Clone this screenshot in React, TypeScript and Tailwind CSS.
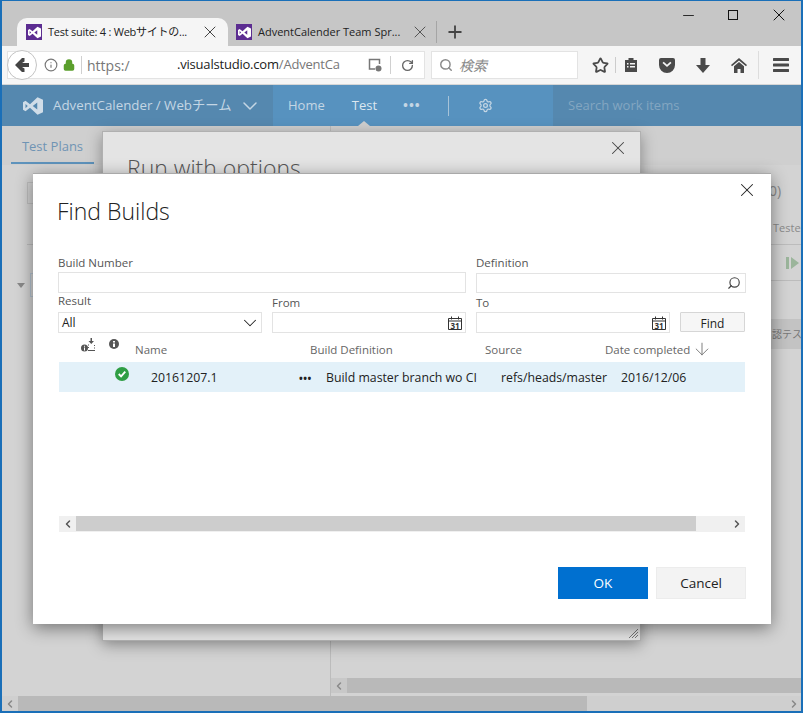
import { ChevronDown, ChevronLeft, ChevronRight, Settings, X, Plus, Minus, Search, RotateCw, Star, ArrowDown, Info, Lock } from 'lucide-react';

const font = { fontFamily: '"Open Sans", "Noto Sans CJK JP", sans-serif' };

function VsIcon({ size = 16, color = '#fff' }: { size?: number; color?: string }) {
  return (
    <svg width={size} height={size} viewBox="0 0 16 16" fill={color}>
      <path d="M11.6 1 16 3v10l-4.4 2-6-5.6L2 12.2 0 11V5l2-1.2 3.6 2.8zM2 6.300v3.400L3.800 8zM11.400 5.200 7.800 8l3.600 2.800z" fillRule="evenodd" />
    </svg>
  );
}

function Calendar() {
  return (
    <svg width="14" height="14" viewBox="0 0 14 14" fill="none" stroke="#333" strokeWidth="1">
      <path d="M0.5 2.500h13v11H0.500zM0.500 5h13M3.500 0.500v3M10.500 0.500v3" />
      <text x="7" y="12.500" textAnchor="middle" fontSize="8" fontWeight="700" fill="#333" stroke="none">31</text>
    </svg>
  );
}

function Field({ label, w, inputClass, children }: { label: string; w: string; inputClass?: string; children?: React.ReactNode }) {
  return (
    <div className={`flex flex-col ${w}`}>
      <span className="text-[11.5px] leading-[14px] pb-[2px] text-[#555]">{label}</span>
      <div className={`border border-[#e3e3e3] bg-white flex items-center justify-end pr-[3px] ${inputClass ?? 'h-[21px]'}`}>{children}</div>
    </div>
  );
}

function TabTitle({ title, className }: { title: string; className?: string }) {
  return <span className={`text-[11px] text-[#222] whitespace-nowrap ${className ?? ''}`}>{title}</span>;
}

export default function App() {
  return (
    <div style={font} className="relative w-[803px] h-[713px] overflow-hidden border-x-2 border-t border-b-2 border-[#1a6fb8] bg-[#d3d3d3] flex flex-col">
      {/* browser tabs */}
      <div className="h-[45px] bg-[#c6c6c6] shrink-0 flex items-end relative">
        <div className="ml-[15px] h-[28px] w-[211px] bg-[#f5f5f5] rounded-t-[10px] flex items-center pl-[9px] gap-[6px]">
          <div className="w-[16px] h-[16px] shrink-0 bg-[#5c2d91] flex items-center justify-center"><VsIcon size={13} /></div>
          <TabTitle title="Test suite: 4 : Webサイトの..." className="tracking-[-0.25px]" />
          <X size={20} strokeWidth={1.2} className="ml-auto mr-[8px] text-[#444]" />
        </div>
        <div className="h-[28px] w-[208px] flex items-center pl-[8px] gap-[6px]">
          <div className="w-[16px] h-[16px] shrink-0 bg-[#5c2d91] flex items-center justify-center"><VsIcon size={13} /></div>
          <TabTitle title="AdventCalender Team Spr..." />
          <X size={20} strokeWidth={1.2} className="ml-auto mr-[6px] text-[#555]" />
        </div>
        <div className="w-px h-[22px] bg-[#a5a5a5] mb-[3px]" />
        <Plus size={20} strokeWidth={2.2} className="ml-[8px] mb-[4px] text-[#444]" />
        <div className="absolute top-[4px] right-[12px] flex gap-[28px] items-center text-[#111]">
          <Minus size={17} strokeWidth={1.2} />
          <div className="w-[10px] h-[10px] border border-[#111] mx-[3px]" />
          <X size={20} strokeWidth={1.2} />
        </div>
      </div>

      {/* address bar */}
      <div className="h-[39px] bg-[#f5f5f5] shrink-0 border-b border-[#d6d6d6] flex items-center pl-[5px] text-[#4a4a4a]">
        <div className="relative w-[418px] h-[28px] bg-white border border-[#e3e3e3] flex items-center">
          <div className="w-[30px] h-[30px] -ml-px rounded-full border border-[#c4c4c4] bg-white flex items-center justify-center shrink-0">
            <svg width="16" height="16" viewBox="0 0 16 16" fill="#444"><path d="M8 1 1 8l7 7h2.500V11.500L8 10h7V6H8l2.500-1.500V1z" /></svg>
          </div>
          <Info size={14} className="ml-[7px] text-[#777]" />
          <Lock size={12} strokeWidth={3} className="ml-[5px] text-[#5b9f2c]" fill="#5b9f2c" />
          <div className="w-px h-[18px] bg-[#d0d0d0] ml-[6px]" />
          <span className="ml-[5px] text-[14px] text-[#777] w-[90px] shrink-0">https:/</span>
          <span className="text-[13px] tracking-[-0.2px] whitespace-nowrap w-[165px] shrink-0 text-[#777]"><span className="text-[#222]">.visualstudio.com</span>/AdventCa</span>
          <svg className="ml-[26px]" width="14" height="14" viewBox="0 0 14 14" fill="none" stroke="#777" strokeWidth="1.500"><path d="M7 11H1.500V1.500h10V6" /><circle cx="10.500" cy="10.500" r="3" fill="#777" stroke="none" /></svg>
          <div className="w-px h-[18px] bg-[#d0d0d0] ml-[8px]" />
          <RotateCw size={13} strokeWidth={2.500} className="ml-[10px] text-[#666]" />
        </div>
        <div className="ml-[6px] w-[147px] h-[28px] bg-white border border-[#e3e3e3] flex items-center pl-[7px] gap-[6px]">
          <Search size={14} strokeWidth={2.500} className="text-[#8a8a8a]" />
          <span className="text-[14px] italic text-[#888]">検索</span>
        </div>
        <Star size={17} strokeWidth={2.500} className="ml-[14px]" />
        <div className="w-px h-[16px] bg-[#ccc] ml-[6px]" />
        <svg className="ml-[8px]" width="14" height="16" viewBox="0 0 14 16" fill="#4a4a4a"><path d="M1 3h3.500V1h5v2H13v12H1zM3 6v1.500h1.500V6zm3 0v1.500h5V6zM3 9v1.500h1.500V9zm3 0v1.500h5V9z" fillRule="evenodd" /></svg>
        <svg className="ml-[21px]" width="16" height="15" viewBox="0 0 16 15" fill="#4a4a4a"><path d="M2 0h12a2 2 0 0 1 2 2v5a8 8 0 0 1-16 0V2a2 2 0 0 1 2-2zm1.500 5L8 9l4.500-4-1.200-1.200L8 6.700 4.700 3.800z" fillRule="evenodd" /></svg>
        <svg className="ml-[21px]" width="14" height="15" viewBox="0 0 14 15" fill="#4a4a4a"><path d="M4.500 0h5v7H14l-7 8-7-8h4.500z" /></svg>
        <svg className="ml-[21px]" width="16" height="15" viewBox="0 0 16 15" fill="#4a4a4a"><path d="M8 0 16 7l-1 1.300L8 2.500 1 8.300 0 7zM8 4l5 4.200V15H9.500v-4h-3v4H3V8.200z" /></svg>
        <div className="w-px h-[28px] bg-[#ddd] ml-[11px]" />
        <svg className="ml-[14px]" width="16" height="14" viewBox="0 0 16 14" fill="#4a4a4a"><path d="M1 0h14a1 1 0 0 1 0 3H1a1 1 0 0 1 0-3zm0 5.500h14a1 1 0 0 1 0 3H1a1 1 0 0 1 0-3zM1 11h14a1 1 0 0 1 0 3H1a1 1 0 0 1 0-3z" /></svg>
      </div>

      {/* vsts header */}
      <div className="h-[41px] shrink-0 bg-[#5588af] flex items-stretch text-[13px] text-[#c4d6e4] relative">
        <div className="w-[271px] flex items-center pl-[21px] shrink-0">
          <VsIcon size={20} color="#d0dde8" />
          <span className="ml-[10px] text-[13.300px] whitespace-nowrap">AdventCalender / Webチーム</span>
          <ChevronDown size={24} strokeWidth={1.500} className="ml-[7px]" />
        </div>
        <div className="w-[280px] bg-[#5792bf] flex items-center pl-[15px] shrink-0">
          <span>Home</span>
          <span className="ml-[27px] text-[#dbe7f0]">Test</span>
          <span className="ml-[26px] font-bold tracking-[1px] leading-none">•••</span>
          <div className="w-px h-[20px] bg-[#a7c3d8] ml-[27px]" />
          <Settings size={15} className="ml-[29px]" />
        </div>
        <span className="ml-[15px] self-center text-[#83a6c1]">Search work items</span>
        <div className="absolute left-[356px] bottom-0 w-0 h-0 border-x-[6px] border-x-transparent border-b-[5px] border-b-[#cfcfcf]" />
      </div>

      {/* dimmed page */}
      <div className="flex-1 min-h-0 flex bg-[#d3d3d3] text-[#8a8a8a] text-[12px]">
        <div className="w-[329px] shrink-0 border-r border-[#bcbcbc]">
          <div className="h-[39px] bg-[#cfcfcf] pt-[10px]">
            <div className="ml-[9px] w-[83px] h-[28px] border-b-2 border-[#5e93bc] text-center text-[13px] text-[#6f94b4] leading-[20px]">Test Plans</div>
          </div>
          <div className="mt-[17px] ml-[25px] w-[12px] h-[22px] border border-[#bfbfbf]" />
          <div className="mt-[40px] ml-[25px] w-[12px] h-px bg-[#bcbcbc]" />
          <div className="mt-[28px] ml-[15px] flex items-center gap-[5px]">
            <div className="w-0 h-0 border-x-[4px] border-x-transparent border-t-[5px] border-t-[#888]" />
            <div className="w-[8px] h-[24px] border border-[#b5c3d0]" />
          </div>
        </div>
        <div className="flex-1 min-w-0 flex flex-col justify-between">
          <div className="h-[39px] bg-[#cfcfcf]" />
          <div className="h-[15px] flex mb-[3px]">
            <div className="w-[16px] flex items-center justify-center bg-[#c8c8c8]"><ChevronLeft size={12} strokeWidth={3} /></div>
            <div className="flex-1 bg-[#b9b9b9]" />
          </div>
        </div>
      </div>
      <div className="h-[15px] shrink-0 flex bg-[#cfcfcf] text-[#888]">
        <div className="w-[16px] flex items-center justify-center"><ChevronLeft size={12} strokeWidth={3} /></div>
        <div className="w-[569px] bg-[#b9b9b9]" />
        <div className="flex-1 flex items-center justify-end pr-[1px]"><ChevronRight size={12} strokeWidth={3} /></div>
      </div>

      {/* right side content behind the dialogs */}
      <div className="absolute left-[767px] top-[179px] text-[14px] text-[#8a8a8a]">0)</div>
      <div className="absolute left-[771px] top-[219px] whitespace-nowrap text-[11px] text-[#8a8a8a]">Tester</div>
      <div className="absolute left-[769px] top-[243px] w-[32px] h-[37px] border-y border-[#bcbcbc] flex items-center justify-end pr-[3px]">
        <svg width="14" height="14" viewBox="0 0 14 14" fill="#9bb59b"><path d="M0 1h3v12H0zM5 1l8 6-8 6z" /></svg>
      </div>
      <div className="absolute left-[769px] top-[318px] w-[32px] h-[30px] bg-[#c3c3c3] pl-[1px] text-[10px] leading-[30px] text-[#777] whitespace-nowrap">認テス</div>

      {/* run with options dialog */}
      <div className="absolute left-[100px] top-[130px] w-[539px] h-[510px] bg-[#e4e4e4] border border-[#b0b0b0] shadow-[0_4px_14px_rgba(0,0,0,0.35)]">
        <div className="mt-[20px] ml-[24px] text-[23px] font-light leading-[32px] text-[#555]">Run with options</div>
        <X size={22} strokeWidth={1.100} className="absolute right-[11px] top-[5px] text-[#444]" />
        <svg className="absolute right-[1px] bottom-[1px]" width="11" height="11" viewBox="0 0 11 11" stroke="#777"><path d="M1 10 10 1M4 10l6-6M7 10l3-3" /></svg>
      </div>

      {/* find builds dialog */}
      <div className="absolute left-[31px] top-[172px] w-[738px] h-[451px] bg-white border-t border-[#a9a9a9] shadow-[0_4px_16px_rgba(0,0,0,0.45)] flex flex-col pl-[25px] pr-[25px]">
        <X size={22} strokeWidth={1.100} className="absolute right-[13px] top-[5px] text-[#222]" />
        <h1 className="mt-[21px] -ml-px text-[23px] font-light leading-[32px] text-[#222]">Find Builds</h1>
        <div className="mt-[29px] flex gap-[10px]">
          <Field label="Build Number" w="w-[408px]" />
          <Field label="Definition" w="w-[270px]" inputClass="h-[20px] mt-px"><Search size={14} className="-scale-x-100 text-[#444] mr-[1px]" /></Field>
        </div>
        <div className="mt-px flex gap-[10px] items-end">
          <div className="flex flex-col w-[204px]">
            <span className="text-[11.500px] leading-[14px] pb-[2px] mb-[2px] text-[#555]">Result</span>
            <div className="h-[21px] border border-[#e3e3e3] flex items-center justify-between pl-[3px] text-[12px] text-[#222]">All<ChevronDown size={22} strokeWidth={1.100} /></div>
          </div>
          <Field label="From" w="w-[194px]"><Calendar /></Field>
          <Field label="To" w="w-[194px]"><Calendar /></Field>
          <button className="w-[65px] h-[20px] mb-px border border-[#d6d6d6] bg-[#f6f6f6] rounded-[1px] text-[12px] text-[#222] leading-none pt-[3px]">Find</button>
        </div>

        <div className="mt-px h-[28px] ml-px relative text-[11.500px] text-[#666] flex items-end pb-[4px] w-[687px]">
          <svg className="absolute left-[22px] top-[4px]" width="15" height="14" viewBox="0 0 15 14">
            <circle cx="3.500" cy="10" r="3.500" fill="#555" />
            <path d="M3 7.800h1v1H3zM3 9.500h1V12.500H3z" fill="#fff" />
            <path d="M9.500 0h1.500v3h2l-2.750 3-2.750-3h2z" fill="#555" />
            <path d="M7 6.500h1v1H7zM7 9h1v1H7zM7 12h7v1H7zM13 7h1v1h-1zM13 9.500h1v1h-1z" fill="#555" />
          </svg>
          <svg className="absolute left-[50px] top-[5px]" width="10" height="10" viewBox="0 0 10 10"><circle cx="5" cy="5" r="5" fill="#555" /><path d="M4 2h2v1.500H4zM4 4.500h2V8H4z" fill="#fff" /></svg>
          <span className="ml-[76px] w-[175px]">Name</span>
          <span className="w-[175px]">Build Definition</span>
          <span className="w-[120px]">Source</span>
          <span className="flex items-center gap-[2px] whitespace-nowrap">Date completed <ArrowDown size={20} strokeWidth={1} className="-my-[3px]" /></span>
        </div>
        <div className="ml-px w-[686px] h-[30px] pt-[3px] bg-[#e3f1f9] flex items-center text-[12.300px] text-[#222] relative">
          <svg className="absolute left-[56px] top-[5px]" width="14" height="14" viewBox="0 0 15 15"><circle cx="7.500" cy="7.500" r="7.500" fill="#2f9e44" /><path d="M4 7.500 6.500 10 11 5" fill="none" stroke="#fff" strokeWidth="2" /></svg>
          <span className="ml-[92px] w-[148px]">20161207.1</span>
          <span className="w-[27px] font-bold text-[10px] tracking-[0.5px]">•••</span>
          <span className="w-[175px] whitespace-nowrap">Build master branch wo CI</span>
          <span className="w-[120px] whitespace-nowrap">refs/heads/master</span>
          <span>2016/12/06</span>
        </div>

        <div className="ml-px w-[686px] h-[16px] mt-[124px] bg-[#f0f0f0] flex items-center text-[#555]">
          <div className="w-[17px] flex justify-center"><ChevronLeft size={12} strokeWidth={3} /></div>
          <div className="w-[620px] h-[15px] bg-[#cdcdcd] self-start" />
          <div className="flex-1 flex justify-end pr-[2px]"><ChevronRight size={12} strokeWidth={3} /></div>
        </div>

        <div className="mt-[35px] flex justify-end gap-[8px] text-[13.500px]">
          <button className="w-[90px] h-[32px] pt-px bg-[#0070d0] text-white">OK</button>
          <button className="w-[90px] h-[32px] pt-px bg-[#f3f3f3] border border-[#ececec] text-[#222]">Cancel</button>
        </div>
      </div>
    </div>
  );
}
